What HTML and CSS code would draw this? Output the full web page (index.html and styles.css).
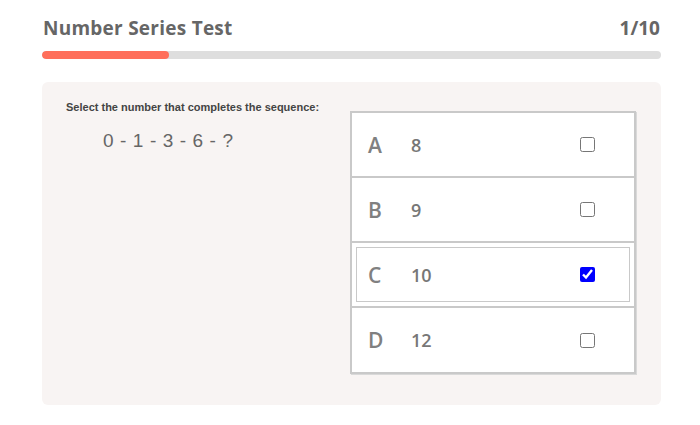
FILE: index.html
```html
<!DOCTYPE html>
<html>
<head>
<meta charset="utf-8">
<link rel="stylesheet" href="styles.css">
</head>
<body>
<div class="page">
  <header class="head">
    <h1 class="title">Number Series Test</h1>
    <span class="count">1/10</span>
  </header>
  <div class="progress"><div class="fill" style="width:127px"></div></div>
  <section class="card">
    <div class="question">
      <p class="prompt">Select the number that completes the sequence:</p>
      <p class="seq">0 - 1 - 3 - 6 - ?</p>
    </div>
    <ul class="options">
      <li class="opt"><div class="inner"><span class="letter">A</span><span class="val">8</span><input type="checkbox" class="chk"></div></li>
      <li class="opt"><div class="inner"><span class="letter">B</span><span class="val">9</span><input type="checkbox" class="chk"></div></li>
      <li class="opt sel"><div class="inner"><span class="letter">C</span><span class="val">10</span><input type="checkbox" class="chk" checked></div></li>
      <li class="opt"><div class="inner"><span class="letter">D</span><span class="val">12</span><input type="checkbox" class="chk"></div></li>
    </ul>
  </section>
</div>
</body>
</html>
```
FILE: styles.css
```css
* { box-sizing: border-box; }
html, body { margin: 0; padding: 0; background: #fff; }
body { font-family: "Open Sans", "Liberation Sans", sans-serif; }
.page { padding: 14px 39px 0 42px; }
.head { display: flex; justify-content: space-between; align-items: center; height: 28px; padding: 0 1px; }
.title { margin: 0; font-size: 19px; font-weight: 700; color: #666; letter-spacing: 0.25px; }
.count { font-size: 19px; font-weight: 700; color: #666; }
.progress { margin-top: 9px; height: 8px; background: #dedede; border-radius: 4px; overflow: hidden; }
.fill { height: 100%; background: #ff6f5b; border-radius: 4px; }
.card { margin-top: 23px; background: #f8f4f3; border-radius: 6px; display: flex; padding: 19px 25px 31px 24px; height: 323px; }
.question { flex: 1; }
.prompt { margin: 0; font-family: "Liberation Sans", Arial, sans-serif; font-size: 11px; font-weight: 700; color: #444; line-height: 13px; }
.seq { margin: 16px 0 0 37px; font-family: "Liberation Sans", Arial, sans-serif; font-size: 19px; color: #666; letter-spacing: 0.6px; }
.options { list-style: none; margin: 10px 0 0 0; padding: 0; width: 286px; background: #fff; border: 2px solid #c9c9c9; box-shadow: 1px 1px 0 #d9d9d9; align-self: flex-start; }
.opt { height: 65px; padding: 4px; border-bottom: 2px solid #c9c9c9; }
.opt:last-child { height: 64px; border-bottom: none; }
.inner { height: 100%; display: flex; align-items: center; border: 1px solid transparent; padding-left: 11px; }
.sel .inner { border-color: #c9c9c9; }
.letter { width: 43px; font-size: 21px; font-weight: 600; color: #808080; }
.val { flex: 1; font-size: 18px; font-weight: 600; color: #777; }
.chk { width: 15px; height: 15px; margin: 0 34px 0 0; accent-color: #0000ff; }
```
